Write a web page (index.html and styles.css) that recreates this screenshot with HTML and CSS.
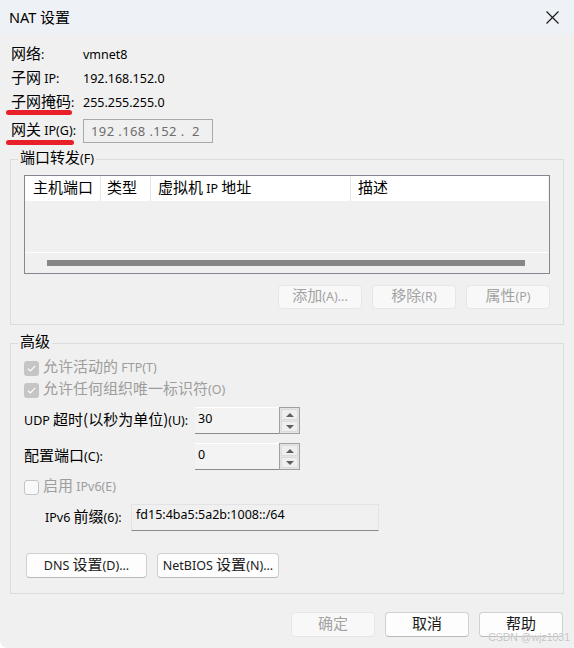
FILE: index.html
```html
<!DOCTYPE html>
<html lang="zh-CN">
<head>
  <meta charset="UTF-8" />
  <title>NAT 设置</title>
  <link rel="stylesheet" href="styles.css">
</head>
<body>

  <div class="window">
    <!-- Title bar -->
    <div class="titlebar">
      <span class="title">NAT <span class="zh">设置</span></span>
      <svg class="close" width="13" height="13" viewBox="0 0 13 13">
        <path d="M0.5 0.5 L12.5 12.5 M12.5 0.5 L0.5 12.5" stroke="#1a1a1a" stroke-width="1.2" fill="none"/>
      </svg>
    </div>

    <div class="content">
      <!-- Network info -->
      <div class="info">
        <div class="info-row">
          <span class="label"><span class="zh">网络</span>:</span>
          <span>vmnet8</span>
        </div>
        <div class="info-row">
          <span class="label"><span class="zh">子网</span> IP:</span>
          <span>192.168.152.0</span>
        </div>
        <div class="info-row">
          <span class="label"><span class="marked"><span class="zh">子网掩码</span></span>:</span>
          <span>255.255.255.0</span>
        </div>
        <div class="info-row gateway">
          <span class="label"><span class="marked"><span class="zh">网关</span> IP(G)</span>:</span>
          <span class="ip-box">192 .168 .152 .  2</span>
        </div>
      </div>

      <!-- Port forwarding -->
      <fieldset class="group forward">
        <legend><span class="zh">端口转发</span>(F)</legend>
        <div class="list">
          <div class="list-head">
            <span class="col c1"><span class="zh">主机端口</span></span>
            <span class="col c2"><span class="zh">类型</span></span>
            <span class="col c3"><span class="zh">虚拟机</span> IP <span class="zh">地址</span></span>
            <span class="col c4"><span class="zh">描述</span></span>
          </div>
          <div class="list-body"></div>
          <div class="list-scroll"><div class="thumb"></div></div>
        </div>
        <div class="btn-row">
          <button class="btn" disabled><span class="zh">添加</span>(A)...</button>
          <button class="btn" disabled><span class="zh">移除</span>(R)</button>
          <button class="btn" disabled><span class="zh">属性</span>(P)</button>
        </div>
      </fieldset>

      <!-- Advanced -->
      <fieldset class="group advanced">
        <legend><span class="zh">高级</span></legend>

        <div class="check">
          <span class="box on"><svg width="9" height="7" viewBox="0 0 9 7"><path d="M0.8 3.6 L3.3 6 L8.2 0.9" stroke="#fff" stroke-width="1.2" fill="none"/></svg></span>
          <span><span class="zh">允许活动的</span> FTP(T)</span>
        </div>
        <div class="check">
          <span class="box on"><svg width="9" height="7" viewBox="0 0 9 7"><path d="M0.8 3.6 L3.3 6 L8.2 0.9" stroke="#fff" stroke-width="1.2" fill="none"/></svg></span>
          <span><span class="zh">允许任何组织唯一标识符</span>(O)</span>
        </div>

        <div class="field-row udp">
          <span class="flabel">UDP <span class="zh">超时(以秒为单位)</span>(U):</span>
          <div class="spin">
            <span class="spin-input">30</span>
            <span class="spin-buttons">
              <span class="spin-btn"><span class="tri up"></span></span>
              <span class="spin-btn"><span class="tri down"></span></span>
            </span>
          </div>
        </div>

        <div class="field-row config">
          <span class="flabel"><span class="zh">配置端口</span>(C):</span>
          <div class="spin">
            <span class="spin-input">0</span>
            <span class="spin-buttons">
              <span class="spin-btn"><span class="tri up"></span></span>
              <span class="spin-btn"><span class="tri down"></span></span>
            </span>
          </div>
        </div>

        <div class="check ipv6">
          <span class="box off"></span>
          <span><span class="zh">启用</span> IPv6(E)</span>
        </div>

        <div class="field-row prefix">
          <span class="plabel">IPv6 <span class="zh">前缀</span>(6):</span>
          <span class="prefix-input">fd15:4ba5:5a2b:1008::/64</span>
        </div>

        <div class="dns-row">
          <button class="btn dns">DNS <span class="zh">设置</span>(D)...</button>
          <button class="btn netbios">NetBIOS <span class="zh">设置</span>(N)...</button>
        </div>
      </fieldset>
    </div>

    <!-- Dialog buttons -->
    <div class="footer">
      <button class="btn big" disabled><span class="zh">确定</span></button>
      <button class="btn big"><span class="zh">取消</span></button>
      <button class="btn big"><span class="zh">帮助</span></button>
    </div>

    <span class="watermark">CSDN @wjz1031</span>
  </div>

</body>
</html>
```

FILE: styles.css
```css
* {
  box-sizing: border-box;
  margin: 0;
  padding: 0;
}

body {
  width: 574px;
  height: 648px;
  overflow: hidden;
  background: #ffffff;
  font-family: "Noto Sans", "Noto Sans CJK SC", sans-serif;
  font-size: 12.5px;
  line-height: 20px;
  color: #000;
}

.zh {
  font-family: "Noto Sans CJK SC", sans-serif;
  font-size: 15px;
  line-height: 1;
}

.window {
  position: relative;
  height: 648px;
  background: #f0f0f0;
  border-bottom-left-radius: 8px;
}

/* title bar */
.titlebar {
  height: 34px;
  background: #eef2f6;
  display: flex;
  align-items: center;
  justify-content: space-between;
  padding: 0 15px 0 9px;
}

.title {
  font-size: 14.5px;
}

.close {
  display: block;
}

.content {
  padding: 9px 10px 0 10px;
}

/* info rows */
.info-row {
  display: flex;
  align-items: center;
  height: 24px;
  white-space: nowrap;
}

.info-row.gateway {
  margin-top: 4px;
}

.label {
  width: 73px;
  padding-left: 1px;
}

.marked {
  position: relative;
}

.marked::after {
  content: '';
  position: absolute;
  left: -5px;
  right: -1px;
  bottom: -4px;
  height: 5px;
  border-radius: 3px;
  background: #e8202a;
}

.gateway .marked::after {
  bottom: -6px;
}

.ip-box {
  width: 130px;
  height: 24px;
  border: 1px solid #a9a9a9;
  background: #f0f0f0;
  color: #6d6d6d;
  padding-left: 7px;
  font-size: 13px;
  line-height: 22px;
  letter-spacing: 0.4px;
  white-space: pre;
}

/* group boxes */
.group {
  border: 1px solid #dcdcdc;
  min-width: 0;
}

.group legend {
  margin-left: -6px;
  padding: 0 2px;
  height: 20px;
  line-height: 20px;
}

.forward {
  margin-top: 6px;
  padding: 6px 13px 15px 13px;
}

.advanced {
  margin-top: 8px;
  padding: 4px 13px 15px 13px;
}

/* port list */
.list {
  height: 99px;
  border: 1px solid #828790;
  background: #f0f0f0;
  display: flex;
  flex-direction: column;
}

.list-head {
  display: flex;
  height: 25px;
  background: #fff;
  margin-right: 1px;
  white-space: nowrap;
}

.col {
  border-right: 1px solid #e5e5e5;
  line-height: 25px;
  padding-left: 7px;
}

.c1 { width: 76px; padding-left: 8px; }
.c2 { width: 50px; padding-left: 6px; }
.c3 { width: 200px; }
.c4 { flex: 1; border-right: none; }

.list-body {
  flex: 1;
}

.list-scroll {
  height: 21px;
  border-top: 1px solid #fff;
  display: flex;
  align-items: center;
  padding: 0 24px 0 22px;
}

.thumb {
  flex: 1;
  height: 6px;
  background: #868686;
}

/* buttons */
.btn-row {
  margin-top: 11px;
  display: flex;
  justify-content: flex-end;
  gap: 10px;
}

.btn {
  width: 84px;
  height: 24px;
  border: 1px solid #d0d0d0;
  border-bottom-color: #b8b8b8;
  border-radius: 4px;
  background: #fdfdfd;
  font-family: inherit;
  font-size: 12.5px;
  line-height: 20px;
  color: #1b1b1b;
  white-space: nowrap;
}

.btn:disabled {
  background: #f8f8f8;
  border-color: #e6e6e6;
  color: #a3a3a3;
}

/* checkboxes */
.check {
  display: flex;
  align-items: center;
  gap: 4px;
  height: 22px;
  color: #9d9d9d;
  white-space: nowrap;
}

.box {
  width: 15px;
  height: 15px;
  border-radius: 3px;
  display: flex;
  align-items: center;
  justify-content: center;
}

.box.on {
  background: #c5c5c5;
}

.box.off {
  background: #f9f9f9;
  border: 1px solid #c5c5c5;
}

.check.ipv6 {
  margin-top: 6px;
}

/* spin fields */
.field-row {
  display: flex;
  align-items: center;
  white-space: nowrap;
}

.field-row.udp {
  margin-top: 6px;
}

.field-row.config {
  margin-top: 9px;
}

.flabel {
  width: 171px;
}

.spin {
  display: flex;
  height: 27px;
}

.spin-input {
  width: 84px;
  background: #f3f3f3;
  border-top: 1px solid #fff;
  border-bottom: 1px solid #8a8a8a;
  padding: 1px 3px 0;
}

.spin-buttons {
  width: 21px;
  border: 1px solid #a0a0a0;
  display: flex;
  flex-direction: column;
  padding: 1px;
  gap: 1px;
  background: #e4e4e4;
}

.spin-btn {
  flex: 1;
  background: #efefef;
  border: 1px solid #dcdcdc;
  display: flex;
  align-items: center;
  justify-content: center;
}

.tri {
  width: 0;
  height: 0;
  border-left: 4px solid transparent;
  border-right: 4px solid transparent;
}

.tri.up {
  border-bottom: 4px solid #606060;
}

.tri.down {
  border-top: 4px solid #606060;
}

/* ipv6 prefix */
.field-row.prefix {
  margin-top: 6px;
  padding-left: 21px;
}

.plabel {
  width: 86px;
}

.prefix-input {
  width: 248px;
  height: 27px;
  background: #f0f0f0;
  border: 1px solid #e3e3e3;
  border-bottom-color: #8a8a8a;
  padding: 0 4px;
}

.dns-row {
  margin-top: 22px;
  padding-left: 2px;
  display: flex;
  gap: 10px;
}

.btn.dns {
  width: 121px;
  height: 25px;
}

.btn.netbios {
  width: 122px;
  height: 25px;
}

/* footer */
.footer {
  margin-top: 18px;
  padding-right: 11px;
  display: flex;
  justify-content: flex-end;
  gap: 10px;
}

.btn.big {
  height: 25px;
}

.watermark {
  position: absolute;
  right: 4px;
  bottom: 5px;
  font-family: "Liberation Sans", sans-serif;
  font-size: 10.5px;
  line-height: 12px;
  color: #c3c3c3;
  text-shadow: 0 0 1px #ffffff;
}
```
